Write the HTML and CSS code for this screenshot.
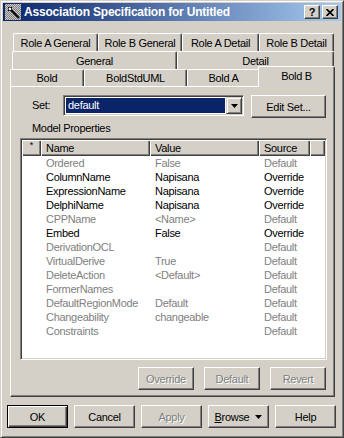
FILE: index.html
```html
<!DOCTYPE html>
<html>
<head>
<meta charset="utf-8">
<link rel="stylesheet" href="styles.css">
</head>
<body>
<div class="window">
  <div class="titlebar">
    <svg class="appicon" width="16" height="16" viewBox="0 0 16 16">
      <defs>
        <pattern id="dith" width="2" height="2" patternUnits="userSpaceOnUse">
          <rect width="2" height="2" fill="#c8c8c8"/>
          <rect width="1" height="1" fill="#808080"/>
          <rect x="1" y="1" width="1" height="1" fill="#808080"/>
        </pattern>
      </defs>
      <rect x="0" y="0" width="16" height="16" fill="url(#dith)"/>
      <path d="M6 6 L14 14" stroke="#000" stroke-width="2.2"/>
      <path d="M3 5 L7 5 M5 3 L5 7 M3 3 L7 7 M7 3 L3 7" stroke="#000" stroke-width="1"/>
      <rect x="4" y="4" width="2" height="2" fill="#fff"/>
    </svg>
    <span class="title">Association Specification for Untitled</span>
    <div class="tbtns">
      <div class="tbtn">?</div>
      <div class="tbtn">
        <svg width="8" height="7" viewBox="0 0 8 7"><path d="M0.5 0 L7.5 7 M7.5 0 L0.5 7" stroke="#000" stroke-width="1.7"/></svg>
      </div>
    </div>
  </div>

  <div class="content">
    <div class="tabrow r1">
      <div class="tab w85">Role A General</div>
      <div class="tab w84">Role B General</div>
      <div class="tab w77">Role A Detail</div>
      <div class="tab w75">Role B Detail</div>
    </div>
    <div class="tabrow r2">
      <div class="tab w165">General</div>
      <div class="tab w157">Detail</div>
    </div>
    <div class="tabrow r3">
      <div class="tab w74">Bold</div>
      <div class="tab w103">BoldStdUML</div>
      <div class="tab w73">Bold A</div>
      <div class="tab sel">Bold B</div>
    </div>

    <div class="panel">
      <div class="setrow">
        <span class="setlabel">Set:</span>
        <div class="combo">
          <div class="comboval">default</div>
          <div class="combobtn">
            <svg width="7" height="4" viewBox="0 0 7 4"><polygon points="0,0 7,0 3.5,4" fill="#000"/></svg>
          </div>
        </div>
        <div class="btn editset">Edit Set...</div>
      </div>
      <div class="mplabel">Model Properties</div>
      <div class="list">
        <div class="lhead">
          <div class="hc c0 star">*</div>
          <div class="hc c1">Name</div>
          <div class="hc c2">Value</div>
          <div class="hc c3">Source</div>
          <div class="hc cf"></div>
        </div>
        <div class="row gray"><div class="c0"></div><div class="c1">Ordered</div><div class="c2">False</div><div class="c3">Default</div></div>
        <div class="row"><div class="c0"></div><div class="c1">ColumnName</div><div class="c2">Napisana</div><div class="c3">Override</div></div>
        <div class="row"><div class="c0"></div><div class="c1">ExpressionName</div><div class="c2">Napisana</div><div class="c3">Override</div></div>
        <div class="row"><div class="c0"></div><div class="c1">DelphiName</div><div class="c2">Napisana</div><div class="c3">Override</div></div>
        <div class="row gray"><div class="c0"></div><div class="c1">CPPName</div><div class="c2">&lt;Name&gt;</div><div class="c3">Default</div></div>
        <div class="row"><div class="c0"></div><div class="c1">Embed</div><div class="c2">False</div><div class="c3">Override</div></div>
        <div class="row gray"><div class="c0"></div><div class="c1">DerivationOCL</div><div class="c2"></div><div class="c3">Default</div></div>
        <div class="row gray"><div class="c0"></div><div class="c1">VirtualDerive</div><div class="c2">True</div><div class="c3">Default</div></div>
        <div class="row gray"><div class="c0"></div><div class="c1">DeleteAction</div><div class="c2">&lt;Default&gt;</div><div class="c3">Default</div></div>
        <div class="row gray"><div class="c0"></div><div class="c1">FormerNames</div><div class="c2"></div><div class="c3">Default</div></div>
        <div class="row gray"><div class="c0"></div><div class="c1">DefaultRegionMode</div><div class="c2">Default</div><div class="c3">Default</div></div>
        <div class="row gray"><div class="c0"></div><div class="c1">Changeability</div><div class="c2">changeable</div><div class="c3">Default</div></div>
        <div class="row gray"><div class="c0"></div><div class="c1">Constraints</div><div class="c2"></div><div class="c3">Default</div></div>
      </div>
      <div class="actions">
        <div class="btn dis w56">Override</div>
        <div class="btn dis w56">Default</div>
        <div class="btn dis w56">Revert</div>
      </div>
    </div>
  </div>

  <div class="footer">
    <div class="btn fbtn default">OK</div>
    <div class="btn fbtn">Cancel</div>
    <div class="btn fbtn dis">Apply</div>
    <div class="btn fbtn"><span><u>B</u>rowse</span>
      <svg class="btri" width="7" height="4" viewBox="0 0 7 4"><polygon points="0,0 7,0 3.5,4" fill="#000"/></svg>
    </div>
    <div class="btn fbtn">Help</div>
  </div>
</div>
</body>
</html>
```

FILE: styles.css
```css
* { box-sizing: border-box; }

body {
  margin: 0;
  font-family: "Liberation Sans", Arial, sans-serif;
  font-size: 11px;
  letter-spacing: -0.3px;
  color: #000;
  background: #d4d0c8;
}

.window {
  width: 344px;
  height: 438px;
  border: 1px solid;
  border-color: #d4d0c8 #404040 #404040 #d4d0c8;
  box-shadow: inset 1px 1px #fff, inset -1px -1px #808080;
  padding: 2px;
  background: #d4d0c8;
  display: flex;
  flex-direction: column;
}

/* Title bar */
.titlebar {
  height: 18px;
  flex: none;
  background: linear-gradient(to right, #0a246a, #a6caf0);
  display: flex;
  align-items: center;
  padding: 0 3px 0 2px;
}
.appicon { flex: none; display: block; }
.title {
  flex: 1;
  margin-left: 3px;
  color: #fff;
  font-weight: bold;
  font-size: 12px;
  letter-spacing: -0.2px;
  white-space: nowrap;
}
.tbtns { display: flex; gap: 2px; }
.tbtn {
  width: 16px;
  height: 14px;
  background: #d4d0c8;
  border: 1px solid;
  border-color: #fff #404040 #404040 #fff;
  box-shadow: inset -1px -1px #808080;
  display: flex;
  align-items: center;
  justify-content: center;
  font-weight: bold;
  font-size: 11px;
  letter-spacing: 0;
  line-height: 12px;
}

/* Tabs */
.content { padding: 12px 6px 0 7px; }
.tabrow { display: flex; }
.r1 { height: 18px; margin-left: 3px; }
.r2 { height: 18px; margin-left: 2px; }
.r3 { height: 17px; }

.tab {
  flex: none;
  height: 100%;
  border-top: 1px solid #fff;
  border-left: 1px solid #fff;
  border-right: 1px solid #404040;
  border-radius: 2px 2px 0 0;
  box-shadow: inset -1px 0 #808080;
  display: flex;
  align-items: center;
  justify-content: center;
  white-space: nowrap;
  background: #d4d0c8;
}
.w73 { width: 73px; }
.w74 { width: 74px; }
.w75 { width: 75px; }
.w77 { width: 77px; }
.w84 { width: 84px; }
.w85 { width: 85px; }
.w103 { width: 103px; }
.w157 { width: 157px; }
.w165 { width: 165px; }
.w56 { width: 56px; }

.tab.sel {
  width: 77px;
  height: 21px;
  margin-top: -3px;
  margin-left: -2px;
  padding-bottom: 3px;
  position: relative;
  z-index: 2;
}

/* Panel */
.panel {
  height: 311px;
  border: 1px solid;
  border-color: #fff #404040 #404040 #fff;
  box-shadow: inset -1px -1px #808080;
  padding: 8px 7px 6px 9px;
  display: flex;
  flex-direction: column;
}

.setrow {
  display: flex;
  align-items: flex-start;
  margin-left: 12px;
}
.setlabel { width: 31px; line-height: 20px; }
.combo {
  width: 181px;
  height: 21px;
  border: 1px solid;
  border-color: #808080 #fff #fff #808080;
  box-shadow: inset 1px 1px #404040, inset -1px -1px #d4d0c8;
  padding: 1px;
  background: #fff;
  display: flex;
}
.comboval {
  flex: 1;
  margin: 1px;
  background: #0a246a;
  color: #fff;
  padding-left: 2px;
  line-height: 15px;
}
.combobtn {
  width: 16px;
  height: 17px;
  background: #d4d0c8;
  border: 1px solid;
  border-color: #d4d0c8 #404040 #404040 #d4d0c8;
  box-shadow: inset 1px 1px #fff, inset -1px -1px #808080;
  display: flex;
  align-items: center;
  justify-content: center;
}
.combobtn svg, .btri { display: block; }

.btn {
  height: 23px;
  background: #d4d0c8;
  border: 1px solid;
  border-color: #fff #404040 #404040 #fff;
  box-shadow: inset -1px -1px #808080;
  display: flex;
  align-items: center;
  justify-content: center;
  white-space: nowrap;
}
.editset { width: 75px; margin-left: 7px; }
.dis { color: #808080; text-shadow: 1px 1px 0 #fff; }

.mplabel {
  margin: 4px 0 0 12px;
  line-height: 13px;
}

/* List */
.list {
  flex: 1;
  margin-top: 3px;
  border: 1px solid;
  border-color: #808080 #fff #fff #808080;
  box-shadow: inset 1px 1px #404040, inset -1px -1px #d4d0c8;
  padding: 1px;
  background: #fff;
  display: flex;
  flex-direction: column;
  overflow: hidden;
}
.lhead { display: flex; height: 16px; flex: none; }
.hc {
  background: #d4d0c8;
  box-shadow: inset 1px 1px #fff, inset -1px -1px #404040, inset -2px -2px #808080;
  line-height: 16px;
  white-space: nowrap;
}
.c0 { width: 19px; flex: none; }
.c1 { width: 109px; flex: none; padding-left: 5px; }
.c2 { width: 109px; flex: none; padding-left: 5px; }
.c3 { width: 51px; flex: none; padding-left: 5px; }
.cf { flex: 1; }
.hc.star {
  text-align: center;
  font-size: 9px;
  line-height: 11px;
  letter-spacing: 0;
}
.row {
  display: flex;
  height: 14px;
  line-height: 14px;
  white-space: nowrap;
}
.row.gray { color: #808080; }

.actions {
  display: flex;
  justify-content: flex-end;
  gap: 10px;
  margin: 7px 1px 0 0;
}

/* Footer */
.footer {
  display: flex;
  gap: 6px;
  padding-left: 4px;
  margin-top: 8px;
}
.fbtn { width: 61px; }
.fbtn.default {
  border: 1px solid #000;
  box-shadow: inset 1px 1px #fff, inset -1px -1px #404040, inset -2px -2px #808080;
}
.btri { margin-left: 6px; }
```
